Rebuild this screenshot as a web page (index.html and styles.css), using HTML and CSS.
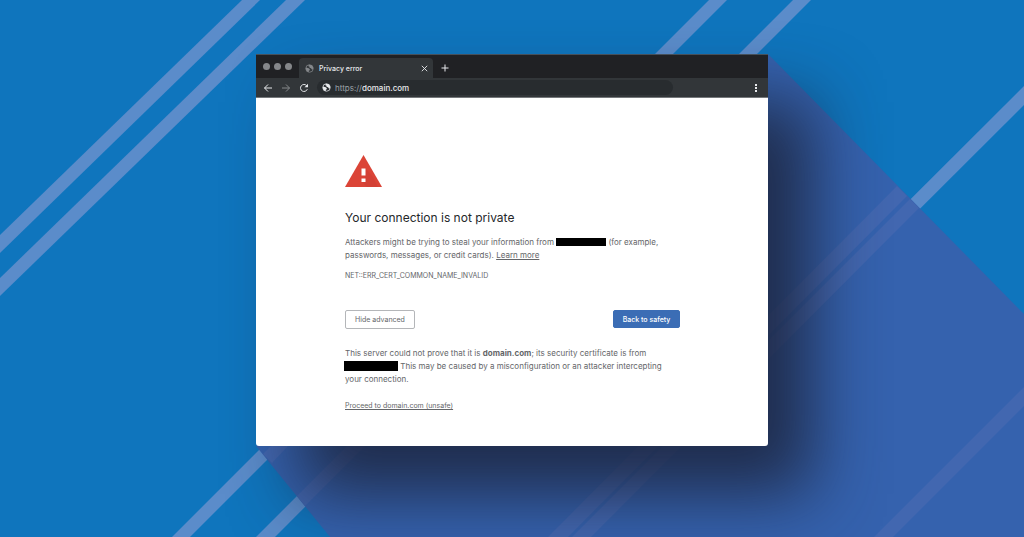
FILE: index.html
```
<!DOCTYPE html>
<html lang="en">
<head>
    <meta charset="UTF-8">
    <meta name="viewport" content="width=device-width, initial-scale=1.0">
    <title>Privacy error</title>
    <link rel="stylesheet" href="styles.css">
</head>
<body>
    <svg class="backdrop" viewBox="0 0 1024 537" preserveAspectRatio="xMidYMin slice" aria-hidden="true">
        <g fill="#5b8cca">
            <path d="M242 0h18L0 253v-18z"/>
            <path d="M286 0h19L0 296v-18z"/>
            <path d="M709 0h18L190 537h-18z"/>
            <path d="M793 0h18L275 537h-19z"/>
            <path d="M1024 86v19L591 537h-19z"/>
        </g>
        <path fill="#3562ae" d="M768 54l256 260v223H330L256 446z"/>
        <g fill="#4267b0">
            <path d="M263 454l8-8h17l-16 17z"/>
            <path d="M297 496l50-50h18l-60 60z"/>
            <path d="M897 186l10 10L568 537h-20z"/>
            <path d="M910 199l9 9L591 537h-19z"/>
            <path d="M1024 387v19L893 537h-19z"/>
        </g>
    </svg>

    <div class="window">
        <div class="tabs">
            <div class="dots"><span></span><span></span><span></span></div>
            <div class="tab">
                <svg class="globe dim" viewBox="0 0 24 24"><circle cx="12" cy="12" r="10"/><path d="M3 9l7 2 3 3-1 3-2 1v4l-5-3-3-6zM10 2l-1 4 3 1v3l4 1 3 4 2-1 1-5-4-6z"/></svg>
                <span class="tab-title">Privacy error</span>
                <button type="button" aria-label="Close tab"><svg viewBox="0 0 10 10"><path d="M2 2l6 6M8 2L2 8"/></svg></button>
            </div>
            <button type="button" class="new-tab" aria-label="New tab"><svg viewBox="0 0 10 10"><path d="M5 1.500v7M1.500 5h7"/></svg></button>
        </div>
        <div class="toolbar">
            <button type="button" aria-label="Back"><svg viewBox="0 0 10 10"><path d="M9 5H1.500M5 1.500L1.500 5 5 8.500"/></svg></button>
            <button type="button" class="off" aria-label="Forward"><svg viewBox="0 0 10 10"><path d="M1 5h7.500M5 1.500L8.500 5 5 8.500"/></svg></button>
            <button type="button" aria-label="Reload"><svg viewBox="0 0 10 10"><path d="M8.300 6.200A3.500 3.500 0 1 1 7.600 2.600"/><path class="solid" d="M9 .8v3.500H5.500z"/></svg></button>
            <div class="address">
                <svg class="globe" viewBox="0 0 24 24"><circle cx="12" cy="12" r="10"/><path d="M3 9l7 2 3 3-1 3-2 1v4l-5-3-3-6zM10 2l-1 4 3 1v3l4 1 3 4 2-1 1-5-4-6z"/></svg>
                <span>https://<b>domain.com</b></span>
            </div>
            <button type="button" class="menu" aria-label="Menu"><svg viewBox="0 0 10 10"><path class="solid" d="M4 1h2v2H4zM4 4h2v2H4zM4 7h2v2H4z"/></svg></button>
        </div>

        <main class="page">
            <svg class="warning" viewBox="0 0 37 32"><path fill="#db4437" d="M18.500 0L37 32H0z"/><path fill="#c93c31" d="M20 13l8 9 5 10H22l-5-5 3-2z" opacity=".4"/><path fill="#fff" d="M16.500 13.500h4v7h-4zM16.500 23.500h4v3.500h-4z"/></svg>
            <h1>Your connection is not private</h1>
            <p>Attackers might be trying to steal your information from <span class="redacted"></span> (for example, passwords, messages, or credit cards). <a href="#">Learn more</a></p>
            <p class="code">NET::ERR_CERT_COMMON_NAME_INVALID</p>
            <div class="buttons">
                <button type="button" class="btn">Hide advanced</button>
                <button type="button" class="btn primary">Back to safety</button>
            </div>
            <p>This server could not prove that it is <b>domain.com</b>; its security certificate is from <span class="redacted wide"></span> This may be caused by a misconfiguration or an attacker intercepting your connection.</p>
            <p class="proceed"><a href="#">Proceed to domain.com (unsafe)</a></p>
        </main>
    </div>
</body>
</html>
```
FILE: styles.css
```
* {
    box-sizing: border-box;
}
body {
    margin: 0;
    min-height: 100vh;
    padding: 54px 0;
    overflow: hidden;
    background: #0f75bd;
    font-family: Inter, "Liberation Sans", sans-serif;
    font-size: 8px;
    color: #646669;
}
.backdrop {
    position: absolute;
    top: 0;
    left: 0;
    width: 100%;
    height: 100%;
}
button {
    margin: 0;
    padding: 0;
    border: 0;
    background: none;
    font: inherit;
    color: inherit;
}
.window {
    position: relative;
    width: 50%;
    min-width: 512px;
    margin: 0 auto;
    background: #fff;
    border-radius: 0 0 3px 3px;
    box-shadow: 44px 48px 68px rgba(28, 36, 62, 0.88);
}
.tabs {
    display: flex;
    height: 24px;
    background: #202124;
    border-top: 1px solid #46505a;
    color: #e8eaed;
}
.tabs svg,
.toolbar svg {
    display: block;
    width: 10px;
    height: 10px;
    fill: none;
    stroke: currentColor;
}
.dots {
    display: flex;
    gap: 4px;
    padding: 8px 7px;
}
.dots span {
    width: 7px;
    height: 7px;
    border-radius: 50%;
    background: #85878a;
}
.tab {
    display: flex;
    align-items: center;
    gap: 5px;
    width: 134px;
    height: 20px;
    margin-top: 3px;
    padding: 0 4px 0 6px;
    background: #323639;
    border-radius: 4px 4px 0 0;
}
.tab-title {
    flex: 1;
    font-size: 7px;
    font-weight: 500;
}
.tab button svg {
    width: 9px;
    height: 9px;
}
.new-tab {
    margin: 3px 0 0 7px;
}
.toolbar {
    display: flex;
    align-items: center;
    gap: 8px;
    height: 20px;
    padding: 0 7px;
    background: #323639;
    border-bottom: 1px solid #75787b;
    color: #e8eaed;
}
.toolbar .solid {
    fill: currentColor;
    stroke: none;
}
.toolbar .off {
    color: #85888b;
}
.address {
    display: flex;
    align-items: center;
    gap: 4px;
    width: 356px;
    height: 15px;
    padding: 0 5px;
    border-radius: 8px;
    background: #282c2f;
    color: #9aa0a6;
    font-size: 8px;
}
.address b {
    color: #e8eaed;
    font-weight: 500;
}
.tabs .globe,
.toolbar .globe {
    width: 9px;
    height: 9px;
    color: #e8eaed;
    stroke-width: 2;
}
.globe path {
    fill: currentColor;
    stroke: none;
}
.tabs .dim {
    color: #85888b;
}
.menu {
    margin-left: auto;
}
.page {
    padding: 57px 88px 34px 89px;
}
.warning {
    display: block;
    width: 37px;
    height: 32px;
}
h1 {
    margin: 22px 0 9px;
    font-size: 12px;
    line-height: 18px;
    font-weight: 400;
    color: #25272a;
}
p {
    margin: 0;
    line-height: 13px;
}
a {
    color: inherit;
}
.redacted {
    display: inline-block;
    width: 50px;
    height: 8px;
    background: #000;
    vertical-align: -1px;
}
.redacted.wide {
    width: 54px;
    height: 10px;
    margin-left: -1px;
    vertical-align: -2px;
}
.code {
    margin-top: 7px;
    font-size: 7px;
}
.buttons {
    display: flex;
    justify-content: space-between;
    align-items: flex-start;
    margin: 28px 0 18px;
}
.btn {
    width: 70px;
    height: 19px;
    border: 1px solid #b4b6b9;
    border-radius: 2px;
    font-size: 7px;
}
.btn.primary {
    width: 67px;
    height: 18px;
    border-color: #3b6db5;
    background: #3b6db5;
    color: #fff;
    font-weight: 500;
}
.proceed {
    margin-top: 13px;
    font-size: 7px;
}
```
